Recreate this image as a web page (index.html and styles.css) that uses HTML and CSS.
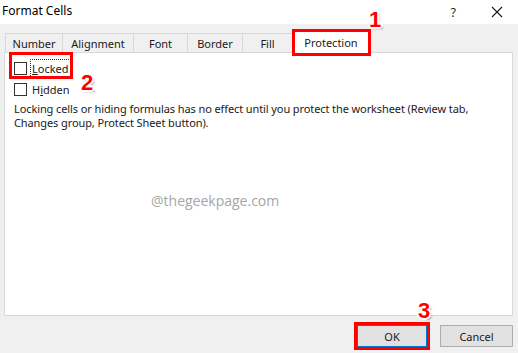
FILE: index.html
```html
<!DOCTYPE html>
<html>
<head>
<meta charset="utf-8">
<link rel="stylesheet" href="styles.css">
</head>
<body>
<div class="dialog">
  <div class="titlebar">
    <span class="title">Format Cells</span>
    <div class="title-controls">
      <span class="help">?</span>
      <svg class="close" width="12" height="12" viewBox="0 0 12 12"><path d="M1 1 L11 11 M11 1 L1 11" stroke="#1a1a1a" stroke-width="1.1"/></svg>
    </div>
  </div>
  <div class="content">
    <div class="tabs">
      <div class="tab t-number">Number</div>
      <div class="tab t-align">Alignment</div>
      <div class="tab t-font">Font</div>
      <div class="tab t-border">Border</div>
      <div class="tab t-fill">Fill</div>
      <div class="tab t-prot active">Protection
        <div class="mark mark-tab"></div>
        <span class="num num1">1</span>
      </div>
    </div>
    <div class="panel">
      <div class="check-row first">
        <span class="box"></span><span class="label focus"><u>L</u>ocked</span>
        <div class="mark mark-locked"></div>
        <span class="num num2">2</span>
      </div>
      <div class="check-row">
        <span class="box"></span><span class="label">H<u>i</u>dden</span>
      </div>
      <p class="desc">Locking cells or hiding formulas has no effect until you protect the worksheet (Review tab, Changes group, Protect Sheet button).</p>
      <div class="watermark">@thegeekpage.com</div>
    </div>
    <div class="footer">
      <div class="btn ok">OK
        <div class="mark mark-ok"></div>
        <span class="num num3">3</span>
      </div>
      <div class="btn cancel">Cancel</div>
    </div>
  </div>
</div>
</body>
</html>
```
FILE: styles.css
```css
html, body {
  margin: 0;
  padding: 0;
}
body {
  width: 518px;
  height: 353px;
  overflow: hidden;
  font-family: "Noto Sans", "Open Sans", sans-serif;
  font-size: 11px;
  color: #1a1a1a;
  background: #f0f0f0;
}
.dialog {
  width: 518px;
  height: 353px;
  display: flex;
  flex-direction: column;
}
.titlebar {
  height: 24px;
  background: #ffffff;
  display: flex;
  align-items: center;
  justify-content: space-between;
}
.title {
  margin-left: 2px;
  margin-top: -3px;
  font-size: 12px;
  color: #000;
}
.title-controls {
  display: flex;
  align-items: center;
  margin-right: 15px;
  gap: 35px;
}
.help {
  font-size: 12px;
  color: #1a1a1a;
}
.close {
  display: block;
}
.content {
  flex: 1;
  padding: 9px 5px 0 4px;
  display: flex;
  flex-direction: column;
}
.tabs {
  display: flex;
  height: 19px;
  margin-left: 1px;
  position: relative;
  z-index: 2;
}
.tab {
  box-sizing: border-box;
  height: 19px;
  border: 1px solid #d9d9d9;
  border-bottom: none;
  border-right: none;
  background: #f0f0f0;
  display: flex;
  align-items: center;
  justify-content: center;
  line-height: 1;
  position: relative;
}
.t-number { width: 57px; }
.t-align { width: 71px; }
.t-font { width: 54px; }
.t-border { width: 55px; }
.t-fill { width: 50px; }
.t-prot {
  width: 78px;
  border-right: 1px solid #d9d9d9;
}
.tab.active {
  background: #ffffff;
  height: 24px;
  margin-top: -3px;
  border-bottom: none;
}
.panel {
  box-sizing: border-box;
  width: 509px;
  height: 264px;
  background: #ffffff;
  border: 1px solid #d9d9d9;
  position: relative;
  padding: 5px 0 0 9px;
}
.check-row {
  display: flex;
  align-items: center;
  height: 21px;
  position: relative;
}
.box {
  box-sizing: border-box;
  width: 13px;
  height: 13px;
  border: 1px solid #333;
  background: #fff;
  margin-right: 4px;
}
.label {
  padding: 1px 1px;
  line-height: 15px;
}
.label.focus {
  outline: 1px dotted #333;
  outline-offset: 0;
}
.desc {
  margin: 0;
  margin-top: 2px;
  line-height: 14px;
  width: 490px;
  letter-spacing: -0.1px;
}
.watermark {
  position: absolute;
  left: 146px;
  top: 138px;
  font-size: 14px;
  color: #a6a6a6;
  font-family: "Open Sans", "Noto Sans", sans-serif;
}
.footer {
  display: flex;
  justify-content: flex-end;
  gap: 13px;
  padding-top: 9px;
}
.btn {
  box-sizing: border-box;
  width: 73px;
  height: 22px;
  background: #e1e1e1;
  border: 1px solid #adadad;
  display: flex;
  align-items: center;
  justify-content: center;
  position: relative;
}
.btn.ok {
  width: 70px;
  border: 1px solid #0078d7;
}
.mark {
  position: absolute;
  border: 3px solid #ff0000;
  box-sizing: border-box;
  pointer-events: none;
}
.mark-tab {
  left: -1px;
  top: -2px;
  width: 79px;
  height: 27px;
}
.mark-locked {
  left: -5px;
  top: -6px;
  width: 64px;
  height: 27px;
}
.mark-ok {
  left: -4px;
  top: -4px;
  width: 76px;
  height: 28px;
}
.num {
  position: absolute;
  font-family: "Liberation Sans", Arial, sans-serif;
  font-weight: bold;
  font-size: 22px;
  color: #ff0000;
  line-height: 1;
  text-shadow:
    -1px -1px 0 #fff, 1px -1px 0 #fff, -1px 1px 0 #fff, 1px 1px 0 #fff,
    0 -2px 0 #fff, 0 2px 0 #fff, -2px 0 0 #fff, 2px 0 0 #fff,
    2px 2px 2px rgba(0,0,0,0.35);
}
.num1 {
  left: 76px;
  top: -22px;
}
.num2 {
  left: 67px;
  top: 14px;
}
.num3 {
  left: 60px;
  top: -26px;
}
```
